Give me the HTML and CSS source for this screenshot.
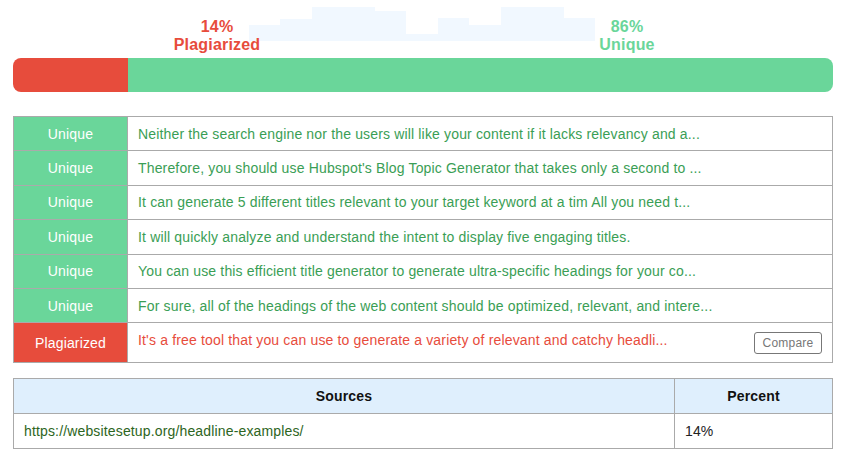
FILE: index.html
```html
<!DOCTYPE html>
<html>
<head>
<meta charset="utf-8">
<link rel="stylesheet" href="styles.css">
</head>
<body>
<div class="page">
  <div class="header">
    <div class="chart">
      <span style="height:16px"></span>
      <span style="height:22px"></span>
      <span style="height:34px"></span>
      <span style="height:34px"></span>
      <span style="height:30px"></span>
      <span style="height:7px"></span>
      <span style="height:23px"></span>
      <span style="height:16px"></span>
      <span style="height:34px"></span>
      <span style="height:34px"></span>
      <span style="height:23px"></span>
    </div>
    <div class="labels">
      <div class="label plag"><div>14%</div><div>Plagiarized</div></div>
      <div class="label uniq"><div>86%</div><div>Unique</div></div>
    </div>
  </div>
  <div class="bar">
    <div class="bar-plag" style="width:14%"></div>
    <div class="bar-uniq"></div>
  </div>

  <table class="results">
    <tr><td class="tag tag-u">Unique</td><td class="txt txt-u">Neither the search engine nor the users will like your content if it lacks relevancy and a...</td></tr>
    <tr><td class="tag tag-u">Unique</td><td class="txt txt-u">Therefore, you should use Hubspot's Blog Topic Generator that takes only a second to ...</td></tr>
    <tr><td class="tag tag-u">Unique</td><td class="txt txt-u">It can generate 5 different titles relevant to your target keyword at a tim All you need t...</td></tr>
    <tr><td class="tag tag-u">Unique</td><td class="txt txt-u">It will quickly analyze and understand the intent to display five engaging titles.</td></tr>
    <tr><td class="tag tag-u">Unique</td><td class="txt txt-u">You can use this efficient title generator to generate ultra-specific headings for your co...</td></tr>
    <tr><td class="tag tag-u">Unique</td><td class="txt txt-u">For sure, all of the headings of the web content should be optimized, relevant, and intere...</td></tr>
    <tr class="last"><td class="tag tag-p">Plagiarized</td><td class="txt txt-p"><div class="pcell"><span>It's a free tool that you can use to generate a variety of relevant and catchy headli...</span><button class="compare">Compare</button></div></td></tr>
  </table>

  <table class="sources">
    <tr><th class="src-h">Sources</th><th class="pct-h">Percent</th></tr>
    <tr><td class="src">https://websitesetup.org/headline-examples/</td><td class="pct">14%</td></tr>
  </table>
</div>
</body>
</html>
```
FILE: styles.css
```css
* { box-sizing: border-box; }
html, body { margin: 0; padding: 0; background: #fff; }
body { font-family: "Liberation Sans", Arial, sans-serif; }
.page { width: 820px; margin-left: 13px; }

.header { position: relative; height: 58px; }
.chart {
  position: absolute;
  left: 236px;
  top: 7px;
  width: 346px;
  height: 34px;
  display: flex;
  align-items: flex-end;
}
.chart span { flex: 1; background: #f1f8ff; }

.labels { position: relative; display: flex; padding-top: 18px; }
.label {
  width: 110px;
  text-align: center;
  font-weight: bold;
  font-size: 16px;
  line-height: 18px;
  letter-spacing: 0.2px;
}
.plag { color: #e74c3c; margin-left: 149px; }
.uniq { color: #6ad69a; margin-left: 300px; }

.bar { display: flex; height: 34px; border-radius: 8px; overflow: hidden; }
.bar-plag { background: #e74c3c; }
.bar-uniq { flex: 1; background: #6ad69a; }

table { border-collapse: collapse; width: 820px; font-size: 14px; }
.results { margin-top: 24px; }
.results td { border: 1px solid #aaa; height: 34.4px; padding: 0 10px; }
.results .txt { letter-spacing: 0.16px; }
.results .tag { width: 114px; text-align: center; color: #fff; padding: 0; letter-spacing: 0.15px; }
.tag-u { background: #6ad69a; }
.tag-p { background: #e74c3c; }
.txt-u { color: #3a9e55; }
.txt-p { color: #e74c3c; }
.results tr.last td { height: 40px; }
.results tr.last td.txt { padding: 8px 10px 8px 10px; vertical-align: top; }
.pcell { display: flex; justify-content: space-between; align-items: flex-start; line-height: 18px; }
.compare {
  margin-top: 1px;
  width: 68px;
  height: 22px;
  border: 1px solid #777;
  border-radius: 3px;
  background: #fff;
  color: #777;
  font-family: "Liberation Sans", Arial, sans-serif;
  font-size: 12px;
  letter-spacing: 0.2px;
  padding: 0;
}

.sources { margin-top: 15px; }
.sources th, .sources td { border: 1px solid #aaa; height: 35px; letter-spacing: 0.15px; }
.sources th { background: #dfeffd; color: #111; font-weight: bold; text-align: center; }
.sources td { padding: 0 10px; }
.pct-h { width: 158px; }
.src { color: #2d6522; }
.pct { color: #222; }
```
